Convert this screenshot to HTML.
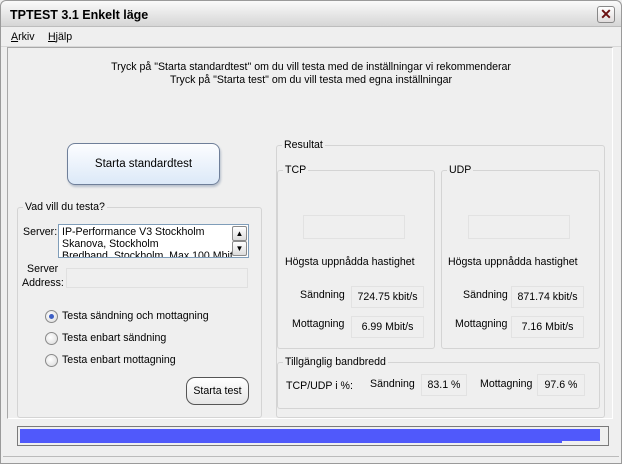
<!DOCTYPE html>
<html><head><meta charset="utf-8"><style>
*{margin:0;padding:0;box-sizing:border-box}
body{width:622px;height:464px;background:#efefef;font-family:"Liberation Sans",sans-serif;font-size:10.6px;color:#000;position:relative;overflow:hidden}
.a{position:absolute}
.t{position:absolute;white-space:nowrap;line-height:15px}
.grp{position:absolute;border:1px solid #d4d4d4;border-radius:3px}
.lg{position:absolute;top:-8px;left:5px;background:#efefef;padding:0 2px;line-height:15px;white-space:nowrap}
.box{position:absolute;border:1px solid #e2e2e2;background:#efefef;text-align:center;line-height:20px;white-space:nowrap}
.rad{position:absolute;width:13px;height:13px;border-radius:50%;border:1px solid #8a8a8a;background:radial-gradient(circle at 40% 40%,#fff,#d8d8d8)}
</style></head><body>
<div class="a" style="left:0;top:0;width:622px;height:464px;border:1px solid #9a9a9a;border-radius:6px 6px 0 0"></div>
<div class="a" style="left:1px;top:1px;width:620px;height:26px;background:linear-gradient(#fafafa,#e4e4e4 60%,#d6d6d6);border-bottom:1px solid #bdbdbd;border-radius:6px 6px 0 0"></div>
<div class="t" style="left:10px;top:8px;font-weight:bold;font-size:12.5px;line-height:15px">TPTEST 3.1 Enkelt läge</div>
<div class="a" style="left:597px;top:6px;width:18px;height:17px;border:1px solid #888;border-radius:3px;background:linear-gradient(#fff,#e0dcdc);color:#6b1010;font-weight:bold;font-size:14px;text-align:center;line-height:15px">✕</div>
<div class="t" style="left:11px;top:30px"><u>A</u>rkiv</div>
<div class="t" style="left:48px;top:30px"><u>H</u>jälp</div>
<div class="a" style="left:1px;top:27px;width:620px;height:20px;border-bottom:1px solid #d8d8d8"></div>
<div class="a" style="left:7px;top:47px;width:606px;height:372px;border:1px solid #a8a8a8;border-right-color:#fff;border-bottom-color:#fff"></div>
<div class="a" style="left:3px;top:456px;width:616px;height:1px;background:#bbb"></div>
<div class="t" style="left:0;width:622px;text-align:center;top:60px">Tryck på "Starta standardtest" om du vill testa med de inställningar vi rekommenderar</div>
<div class="t" style="left:0;width:622px;text-align:center;top:73px">Tryck på "Starta test" om du vill testa med egna inställningar</div>
<div class="a" style="left:67px;top:143px;width:153px;height:42px;border:1px solid #6f7f99;border-radius:8px;background:linear-gradient(#fcfdff,#dce9f8);box-shadow:1px 2px 2px #b8c0cc;text-align:center;line-height:40px;font-size:11.5px">Starta standardtest</div>
<div class="grp" style="left:17px;top:207px;width:245px;height:211px"><div class="lg">Vad vill du testa?</div></div>
<div class="t" style="left:23px;top:225px">Server:</div>
<div class="a" style="left:58px;top:224px;width:191px;height:34px;border:1px solid #7f9db9;background:#fff;overflow:hidden">
<div class="t" style="left:3px;top:0px">IP-Performance V3 Stockholm</div>
<div class="t" style="left:3px;top:12px">Skanova, Stockholm</div>
<div class="t" style="left:3px;top:24px">Bredband, Stockholm, Max 100 Mbit</div>
<div class="a" style="left:173px;top:1px;width:15px;height:15px;border:1px solid #8a8a8a;border-radius:2px;background:linear-gradient(#fff,#dcdcdc);font-size:8px;text-align:center;line-height:13px">▲</div>
<div class="a" style="left:173px;top:16px;width:15px;height:15px;border:1px solid #8a8a8a;border-radius:2px;background:linear-gradient(#fff,#dcdcdc);font-size:8px;text-align:center;line-height:13px">▼</div>
</div>
<div class="t" style="left:27px;top:262px">Server</div>
<div class="t" style="left:22px;top:276px">Address:</div>
<div class="a" style="left:66px;top:268px;width:182px;height:20px;border:1px solid #e0e0e0"></div>
<div class="rad" style="left:45px;top:310px"><div class="a" style="left:3px;top:3px;width:5px;height:5px;border-radius:50%;background:#3d5fc4"></div></div>
<div class="t" style="left:62px;top:309px">Testa sändning och mottagning</div>
<div class="rad" style="left:45px;top:332px"></div>
<div class="t" style="left:62px;top:331px">Testa enbart sändning</div>
<div class="rad" style="left:45px;top:354px"></div>
<div class="t" style="left:62px;top:353px">Testa enbart mottagning</div>
<div class="a" style="left:186px;top:377px;width:63px;height:28px;border:1px solid #555;border-radius:9px;background:linear-gradient(#fff,#e6e6e6);text-align:center;line-height:26px">Starta test</div>
<div class="grp" style="left:276px;top:145px;width:329px;height:273px"><div class="lg">Resultat</div></div>
<div class="grp" style="left:277px;top:170px;width:158px;height:179px"><div class="lg">TCP</div></div>
<div class="grp" style="left:441px;top:170px;width:159px;height:179px"><div class="lg">UDP</div></div>
<div class="box" style="left:303px;top:215px;width:102px;height:24px"></div>
<div class="box" style="left:468px;top:215px;width:102px;height:24px"></div>
<div class="t" style="left:285px;top:255px">Högsta uppnådda hastighet</div>
<div class="t" style="left:448px;top:255px">Högsta uppnådda hastighet</div>
<div class="t" style="left:300px;top:288px">Sändning</div>
<div class="box" style="left:351px;top:286px;width:73px;height:22px">724.75 kbit/s</div>
<div class="t" style="left:292px;top:317px">Mottagning</div>
<div class="box" style="left:351px;top:316px;width:73px;height:22px">6.99 Mbit/s</div>
<div class="t" style="left:463px;top:288px">Sändning</div>
<div class="box" style="left:511px;top:286px;width:73px;height:22px">871.74 kbit/s</div>
<div class="t" style="left:455px;top:317px">Mottagning</div>
<div class="box" style="left:511px;top:316px;width:73px;height:22px">7.16 Mbit/s</div>
<div class="grp" style="left:277px;top:362px;width:323px;height:47px"><div class="lg">Tillgänglig bandbredd</div></div>
<div class="t" style="left:286px;top:379px">TCP/UDP i %:</div>
<div class="t" style="left:370px;top:377px">Sändning</div>
<div class="box" style="left:421px;top:374px;width:46px;height:22px">83.1 %</div>
<div class="t" style="left:480px;top:377px">Mottagning</div>
<div class="box" style="left:537px;top:374px;width:48px;height:22px">97.6 %</div>
<div class="a" style="left:17px;top:426px;width:592px;height:20px;border:1px solid #7a7a7a"></div>
<div class="a" style="left:20px;top:429px;width:580px;height:14px;background:#5059fb"></div>
<div class="a" style="left:562px;top:441px;width:38px;height:2px;background:#efefef"></div>
</body></html>
